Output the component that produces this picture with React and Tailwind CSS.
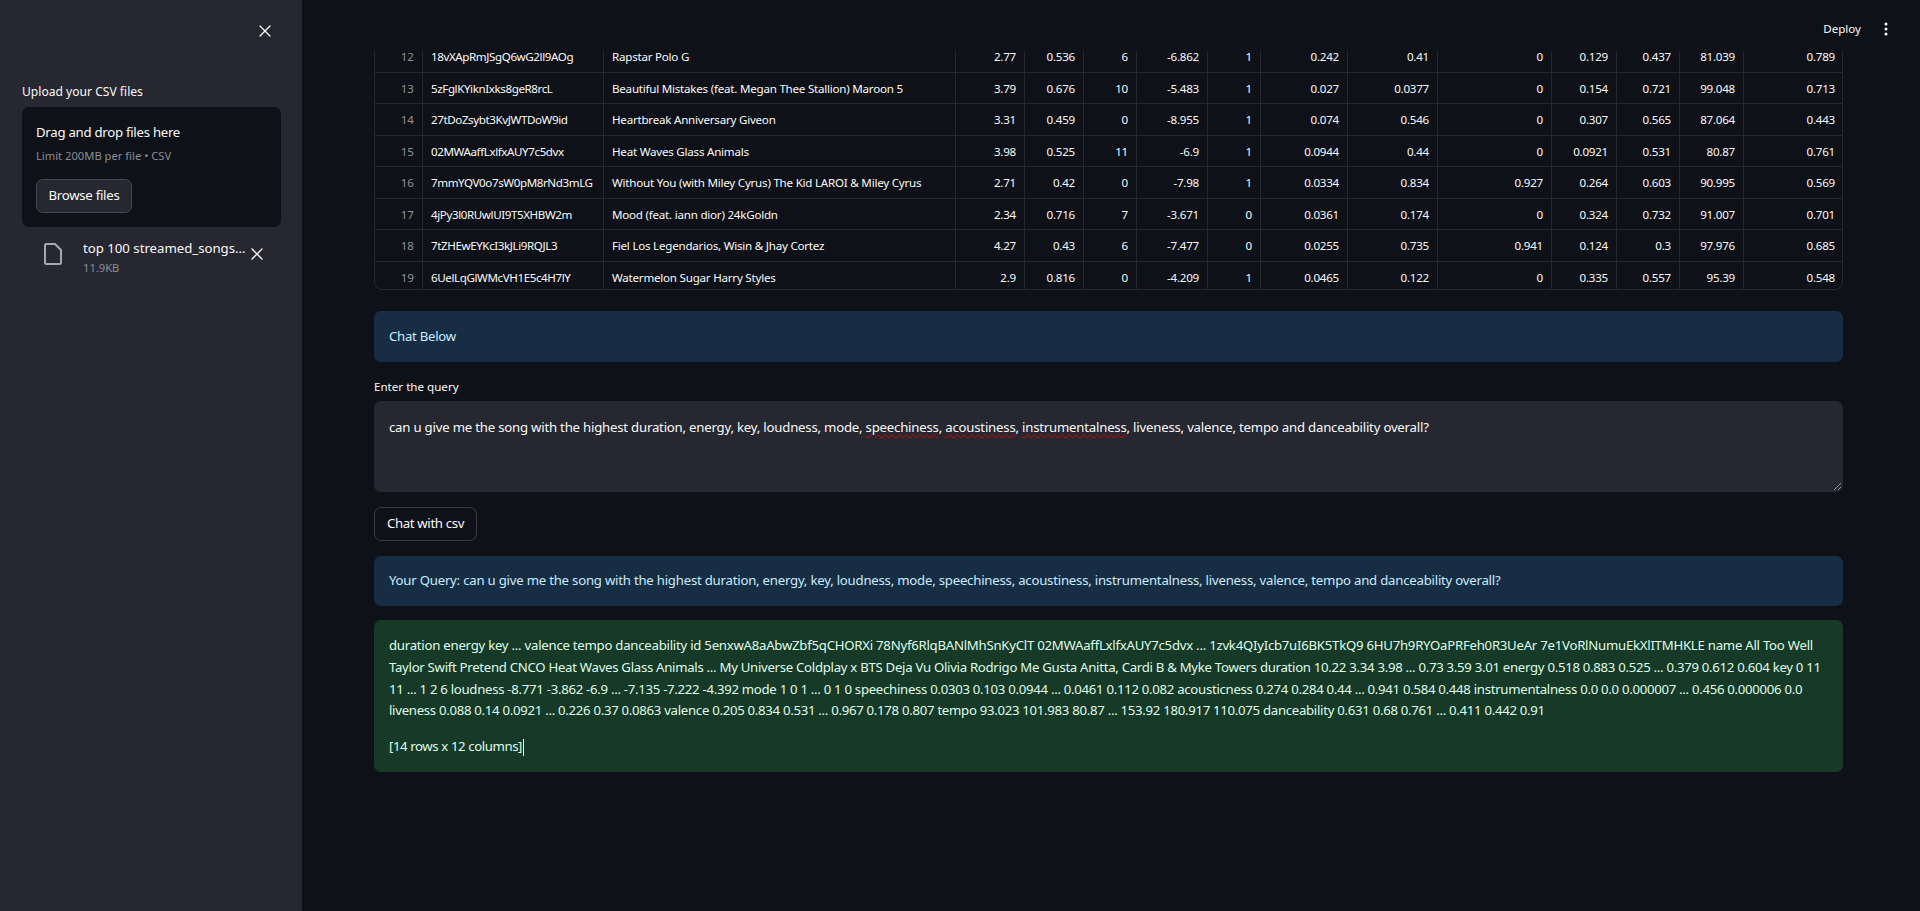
import { X } from "lucide-react";

const rows = [
  ["12", "18vXApRmJSgQ6wG2ll9AOg", "Rapstar Polo G", "2.77", "0.536", "6", "-6.862", "1", "0.242", "0.41", "0", "0.129", "0.437", "81.039", "0.789"],
  ["13", "5zFglKYiknIxks8geR8rcL", "Beautiful Mistakes (feat. Megan Thee Stallion) Maroon 5", "3.79", "0.676", "10", "-5.483", "1", "0.027", "0.0377", "0", "0.154", "0.721", "99.048", "0.713"],
  ["14", "27tDoZsybt3KvJWTDoW9id", "Heartbreak Anniversary Giveon", "3.31", "0.459", "0", "-8.955", "1", "0.074", "0.546", "0", "0.307", "0.565", "87.064", "0.443"],
  ["15", "02MWAaffLxlfxAUY7c5dvx", "Heat Waves Glass Animals", "3.98", "0.525", "11", "-6.9", "1", "0.0944", "0.44", "0", "0.0921", "0.531", "80.87", "0.761"],
  ["16", "7mmYQV0o7sW0pM8rNd3mLG", "Without You (with Miley Cyrus) The Kid LAROI & Miley Cyrus", "2.71", "0.42", "0", "-7.98", "1", "0.0334", "0.834", "0.927", "0.264", "0.603", "90.995", "0.569"],
  ["17", "4jPy3l0RUwlUI9T5XHBW2m", "Mood (feat. iann dior) 24kGoldn", "2.34", "0.716", "7", "-3.671", "0", "0.0361", "0.174", "0", "0.324", "0.732", "91.007", "0.701"],
  ["18", "7tZHEwEYKcI3kJLi9RQJL3", "Fiel Los Legendarios, Wisin & Jhay Cortez", "4.27", "0.43", "6", "-7.477", "0", "0.0255", "0.735", "0.941", "0.124", "0.3", "97.976", "0.685"],
  ["19", "6UelLqGlWMcVH1E5c4H7lY", "Watermelon Sugar Harry Styles", "2.9", "0.816", "0", "-4.209", "1", "0.0465", "0.122", "0", "0.335", "0.557", "95.39", "0.548"],
];

const answerLines = [
  ["duration energy key ... valence tempo danceability id 5enxwA8aAbwZbf5qCHORXi 78Nyf6RlqBANlMhSnKyClT 02MWAaffLxlfxAUY7c5dvx ... 1zvk4QIyIcb7uI6BK5TkQ9 6HU7h9RYOaPRFeh0R3UeAr 7e1VoRlNumuEkXlITMHKLE name All Too Well", "tracking-[-0.019em]"],
  ["Taylor Swift Pretend CNCO Heat Waves Glass Animals ... My Universe Coldplay x BTS Deja Vu Olivia Rodrigo Me Gusta Anitta, Cardi B & Myke Towers duration 10.22 3.34 3.98 ... 0.73 3.59 3.01 energy 0.518 0.883 0.525 ... 0.379 0.612 0.604 key 0 11", "tracking-[-0.022em]"],
  ["11 ... 1 2 6 loudness -8.771 -3.862 -6.9 ... -7.135 -7.222 -4.392 mode 1 0 1 ... 0 1 0 speechiness 0.0303 0.103 0.0944 ... 0.0461 0.112 0.082 acousticness 0.274 0.284 0.44 ... 0.941 0.584 0.448 instrumentalness 0.0 0.0 0.000007 ... 0.456 0.000006 0.0", "tracking-[-0.022em]"],
  ["liveness 0.088 0.14 0.0921 ... 0.226 0.37 0.0863 valence 0.205 0.834 0.531 ... 0.967 0.178 0.807 tempo 93.023 101.983 80.87 ... 153.92 180.917 110.075 danceability 0.631 0.68 0.761 ... 0.411 0.442 0.91", "tracking-[-0.022em]"],
];

const Misspelled = ({ children }) => (
  <span className="underline decoration-wavy decoration-[#d80000] decoration-1 underline-offset-2">{children}</span>
);

const cellClass = (i) => {
  if (i === 0) return "justify-end text-[#8f9197]";
  if (i === 1) return "justify-start tracking-[-0.035em]";
  if (i === 2) return "justify-start tracking-[-0.02em]";
  return "justify-end tracking-[-0.02em]";
};

const DataTable = () => (
  <div className="h-[239px] w-[1469px] shrink-0 overflow-hidden rounded-b-lg border-x border-b border-[#26282e]">
    <div className="-mt-[10px]">
      {rows.map((row) => (
        <div
          key={row[0]}
          className="grid h-[31.5px] grid-cols-[48px_181px_352px_69px_59px_53px_71px_53px_87px_90px_114px_65px_63px_64px_99px] border-b border-[#26282e]"
        >
          {row.map((cell, i) => (
            <div
              key={i}
              className={`flex items-center overflow-hidden border-r border-[#26282e] px-2 pt-[1px] text-[11.6px] whitespace-nowrap last:border-r-0 ${cellClass(i)}`}
            >
              {cell}
            </div>
          ))}
        </div>
      ))}
    </div>
  </div>
);

const Sidebar = () => (
  <aside className="flex w-[302px] shrink-0 flex-col bg-[#262730] pl-[22px]">
    <div className="flex h-[84px] justify-end pr-[27px] pt-[21px]">
      <X size={20} strokeWidth={1.6} className="text-[#fafafa]" />
    </div>
    <div className="text-[12.1px] leading-[16px] text-[#fafafa]">Upload your CSV files</div>
    <div className="mt-[7px] h-[120px] w-[259px] rounded-[7px] bg-[#0e1117] px-[14px] pt-[14px]">
      <div className="text-[13.2px] leading-[22px] tracking-[-0.02em] text-[#fafafa]">Drag and drop files here</div>
      <div className="mt-[3px] text-[11.2px] leading-[20px] text-[#8b8e95]">Limit 200MB per file • CSV</div>
      <button className="mt-[13px] h-[34px] w-[96px] rounded-[7px] border border-[#45464e] bg-[#262730] text-[13.2px] tracking-[-0.02em] text-[#fafafa]">
        Browse files
      </button>
    </div>
    <div className="mt-[10px] flex items-start pl-[22px]">
      <svg width="18" height="22" viewBox="0 0 18 22" fill="none" stroke="#a3a8b8" strokeWidth="2" className="mt-[6px] shrink-0">
        <path d="M2.5 1h8.5l6 6v12.5a1.5 1.5 0 0 1-1.5 1.5h-13a1.5 1.5 0 0 1-1.5-1.5v-17A1.5 1.5 0 0 1 2.5 1z" />
      </svg>
      <div className="ml-[21px] w-[165px]">
        <div className="truncate text-[13.2px] leading-[22px] text-[#fafafa]">top 100 streamed_songs.…</div>
        <div className="text-[11.2px] leading-[17px] text-[#8b8e95]">11.9KB</div>
      </div>
      <X size={20} strokeWidth={1.6} className="mt-[7px] -ml-[1px] text-[#fafafa]" />
    </div>
  </aside>
);

export default function App() {
  return (
    <div className="flex h-screen overflow-hidden bg-[#0e1117] font-['Noto_Sans',sans-serif] text-[#fafafa]">
      <Sidebar />
      <main className="flex min-w-0 flex-1 flex-col">
        <header className="flex h-[51px] shrink-0 items-start justify-end pr-[32px] pt-[19px]">
          <span className="text-[11.6px] leading-[20px]">Deploy</span>
          <svg width="4" height="14" viewBox="0 0 4 14" fill="#fafafa" className="ml-[23px] mt-[3px]">
            <circle cx="2" cy="2" r="1.5" />
            <circle cx="2" cy="7" r="1.5" />
            <circle cx="2" cy="12" r="1.5" />
          </svg>
        </header>
        <div className="flex flex-col pl-[72px]">
          <DataTable />

          <div className="mt-[21px] flex h-[51px] w-[1469px] items-center rounded-[7px] bg-[#172d43] px-[15px] text-[13.2px] tracking-[-0.02em] text-[#c7ebff]">
            Chat Below
          </div>

          <label className="mt-[16px] text-[11.6px] leading-[18px]">Enter the query</label>
          <div className="relative mt-[5px] h-[91px] w-[1469px] rounded-[7px] bg-[#262730] px-[15px] py-[15px] text-[13.2px] leading-[22px] tracking-[-0.016em]">
            can u give me the song with the highest duration, energy, key, loudness, mode, <Misspelled>speechiness</Misspelled>, <Misspelled>acoustiness</Misspelled>, <Misspelled>instrumentalness</Misspelled>, liveness, valence, tempo and danceability overall?
            <svg width="9" height="9" viewBox="0 0 9 9" stroke="#8a8b90" className="absolute right-[1px] bottom-[1px]">
              <path d="M1 8 8 1M5 8l3-3" />
            </svg>
          </div>

          <button className="mt-[15px] h-[34px] w-[103px] rounded-[7px] border border-[#3a3c43] text-[13.2px] tracking-[-0.025em]">Chat with csv</button>

          <div className="mt-[15px] flex h-[50px] w-[1469px] items-center rounded-[7px] bg-[#172d43] px-[15px] text-[13.2px] tracking-[-0.017em] whitespace-nowrap text-[#c7ebff]">
            Your Query: can u give me the song with the highest duration, energy, key, loudness, mode, speechiness, acoustiness, instrumentalness, liveness, valence, tempo and danceability overall?
          </div>

          <div className="mt-[14px] h-[152px] w-[1469px] rounded-[7px] bg-[#173928] px-[15px] pt-[15px] text-[13.2px] leading-[21.8px] text-[#dffde9]">
            {answerLines.map(([line, tracking]) => (
              <div key={line} className={`whitespace-nowrap ${tracking}`}>{line}</div>
            ))}
            <div className="mt-[14px] flex items-center tracking-[-0.03em]">
              [14 rows x 12 columns]<span className="ml-px inline-block h-[17px] w-px bg-[#dffde9]" />
            </div>
          </div>
        </div>
      </main>
    </div>
  );
}
